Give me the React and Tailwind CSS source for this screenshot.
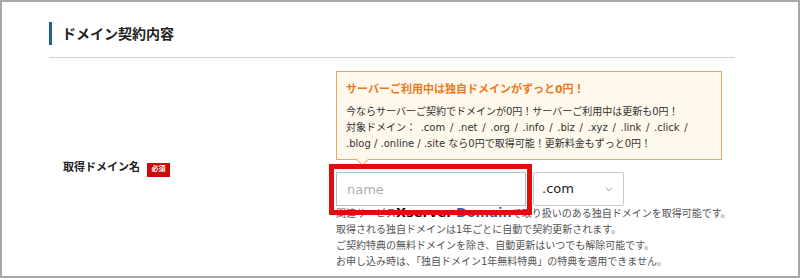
import React from "react";

export default function App() {
    return (
        <div className="w-[800px] h-[278px] border-2 border-[#a8a8a8] bg-white overflow-hidden pl-[47px] pr-[63px] pt-[20px] font-['DejaVu_Sans','Noto_Sans_CJK_JP',sans-serif] text-[#333]">
            {/* 見出し */}
            <div className="flex items-center h-[23px] border-l-[3px] border-[#22609c] pl-[10px]">
                <h2 className="text-[14px] font-bold text-[#222] leading-none">ドメイン契約内容</h2>
            </div>
            <div className="mt-[12px] border-t border-[#d0d0d0]"></div>

            <div className="flex">
                {/* ラベル */}
                <div className="w-[287px] shrink-0 pl-[14px] pt-[102px]">
                    <div className="flex items-center h-[16px] gap-[7px]">
                        <span className="text-[11px] font-bold text-[#222]">取得ドメイン名</span>
                        <span className="mt-[3px] w-[23px] h-[14px] bg-[#cc0a0a] text-white text-[7px] font-bold flex items-center justify-center leading-none">必須</span>
                    </div>
                </div>

                <div className="flex-1">
                    {/* お知らせボックス */}
                    <div className="relative mt-[13px] w-[386px] h-[89px] border border-[#f0a663] bg-[#fff8ec] pl-[9px] pt-[10px]">
                        <p className="text-[11px] leading-[16px] font-bold text-[#ec7a1c]">サーバーご利用中は独自ドメインがずっと0円！</p>
                        <div className="mt-[6px] text-[10px] leading-[16px] text-[#333] whitespace-nowrap">
                            <p>今ならサーバーご契約でドメインが0円！サーバーご利用中は更新も0円！</p>
                            <p className="[word-spacing:1.5px]">対象ドメイン： .com / .net / .org / .info / .biz / .xyz / .link / .click /</p>
                            <p>.blog / .online / .site なら0円で取得可能！更新料金もずっと0円！</p>
                        </div>
                        <div className="absolute left-[21px] bottom-[-5px] w-[9px] h-[9px] rotate-45 bg-[#fff8ec] border-r border-b border-[#f0a663]"></div>
                    </div>

                    {/* 入力欄 */}
                    <div className="relative mt-[12px] flex">
                        <input
                            type="text"
                            placeholder="name"
                            className="w-[190px] h-[34px] border border-[#bdbdbd] px-[10px] text-[13px] text-[#333] placeholder:text-[#b0b0b0] outline-none"
                        />
                        <div className="ml-[7px] w-[91px] h-[34px] border border-[#c8c8c8] rounded-[2px] flex items-center justify-between pl-[8px] pr-[10px]">
                            <span className="text-[13px] text-[#222]">.com</span>
                            <svg width="8" height="5" viewBox="0 0 8 5" fill="none">
                                <path d="M0.5 0.5 L4 4 L7.5 0.5" stroke="#aaa" strokeWidth="1" />
                            </svg>
                        </div>
                        {/* 強調枠 */}
                        <div className="absolute left-[-7px] top-[-8px] w-[203px] h-[51px] border-[5px] border-[#e00d0d] z-10"></div>
                    </div>

                    {/* 注意書き */}
                    <div className="text-[10px] leading-[16px] text-[#555] whitespace-nowrap">
                        <p>関連サービス<span className="font-bold text-[#111] text-[13px] leading-none">Xserver</span> <span className="font-bold text-[#1f63b5] text-[13px] leading-none">Domain</span>で取り扱いのある独自ドメインを取得可能です。</p>
                        <p>取得される独自ドメインは1年ごとに自動で契約更新されます。</p>
                        <p>ご契約特典の無料ドメインを除き、自動更新はいつでも解除可能です。</p>
                        <p>お申し込み時は、「独自ドメイン1年無料特典」の特典を適用できません。</p>
                    </div>
                </div>
            </div>
        </div>
    );
}
